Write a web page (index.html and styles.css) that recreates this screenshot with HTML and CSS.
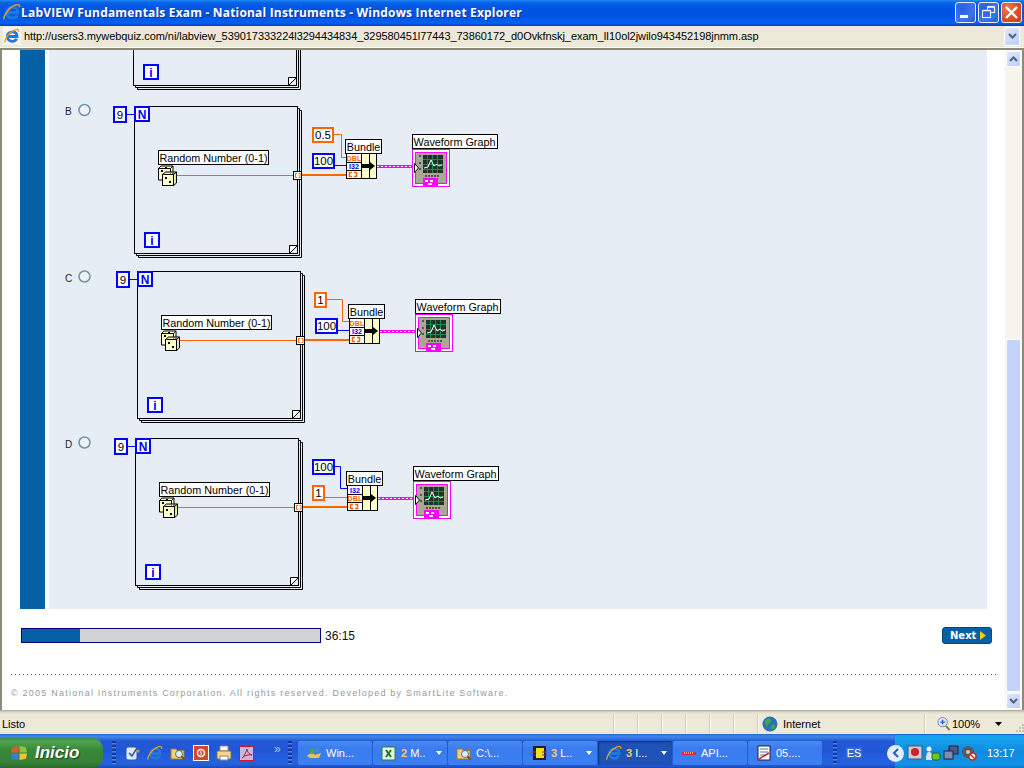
FILE: index.html
```html
<!DOCTYPE html>
<html lang="en">

<head>
    <meta charset="UTF-8">
    <title>LabVIEW Fundamentals Exam - National Instruments - Windows Internet Explorer</title>
    <link rel="stylesheet" href="styles.css">
</head>

<body>

    <!-- shared drawings -->
    <svg class="defs" width="0" height="0">
        <defs>
            <symbol id="ie" viewBox="0 0 16 16">
                <path d="M4 8.500h9c0-3-1.800-4.700-4.500-4.700S3.300 5.800 3.300 8.600s2.200 4.700 5 4.700c2.100 0 3.600-.900 4.300-2.600" fill="none" stroke="#1f78dc" stroke-width="2.800"/>
                <path d="M1 14.500C0 12 5 4 11 1.800c3-1 4 .3 3.600 2" fill="none" stroke="#e8a020" stroke-width="1.300"/>
            </symbol>
            <symbol id="folder" viewBox="0 0 16 16">
                <path d="M1 4h5l1 1.500h7V14H1z" fill="#f3cf77" stroke="#a57a24"/>
                <circle cx="9" cy="9" r="3.500" fill="#dfeefa" stroke="#5d6f80"/>
                <path d="M11.500 11.500l3 3" stroke="#7a4f1c" stroke-width="2"/>
            </symbol>
            <g id="loop">
                <rect x=".5" y=".5" width="163" height="147" class="frame"/>
                <path d="M2.500 147.500v2h163V2.500h-2M4.500 149.500v2h163V4.500h-2" class="frame"/>
                <path d="M155.500 147.500v-8h8zM155.500 147.500l8-8" fill="#fff" stroke="#000"/>
            </g>
            <g id="dice">
                <path d="M158.500 168.500l2.500-2.500h12v10h-3v4h-11.500z" fill="#ffc" stroke="#000"/>
                <path d="M158.500 168.500h12l2.500-2.500M170.500 168.500v5" fill="none" stroke="#000"/>
                <rect x="162.500" y="174.500" width="11" height="11" fill="#ffc" stroke="#000"/>
                <path d="M173.500 174.500l3-2.500v11l-3 2.500zM162.500 174.500l3-2.500h11" fill="#e8e4a8" stroke="#000"/>
                <path d="M165 177h2v2h-2zM169 181h2v2h-2zM161 170h2v2h-2zM165 167h2v1h-2z" fill="#000"/>
            </g>
            <g id="tunnel">
                <rect x="293.500" y="171.500" width="8" height="8" fill="#fff" stroke="#000"/>
                <path d="M297 173.500h-1.500v4H297M298.500 173.500h1.500v4h-1.500" fill="none" stroke="#f60"/>
            </g>
            <g id="bundle">
                <rect x="346.500" y="153.500" width="30" height="25" fill="#ffc" stroke="#000"/>
                <rect x="346.500" y="153.500" width="15" height="25" fill="#fff" stroke="#000"/>
                <path d="M346 162.500h15M346 170.500h15M369.500 153v25" stroke="#000"/>
                <path d="M362 164h8v-2l5 4-5 4v-2h-8z" fill="#000"/>
                <path d="M352 172.500h-2.500v4H352M354 172.500h2.500v4H354" fill="none" stroke="#f60" stroke-width="1.500"/>
            </g>
            <g id="graph">
                <path d="M377 166.500h36" stroke="#f0f" stroke-width="3"/>
                <path d="M377 166.500h36" stroke="#fff" stroke-dasharray="2 2"/>
                <rect x="412.500" y="149.500" width="37" height="37" fill="#fff" stroke="#f0f"/>
                <rect x="415.500" y="152.500" width="31" height="31" fill="#fff" stroke="#f0f"/>
                <rect x="416" y="153" width="30" height="30" fill="#aaa794"/>
                <rect x="423" y="155" width="20" height="18" fill="#24302a"/>
                <path d="M423 159.500h20M423 164.500h20M423 169.500h20M427.500 155v18M432.500 155v18M437.500 155v18" stroke="#1c8a4a"/>
                <path d="M424 168l4-1 3-7 3 6 3-2 2 2 3-1" fill="none" stroke="#fff"/>
                <path d="M419 156h2M419 163h2M419 169h2M425 176h15" stroke="#000" stroke-dasharray="2 1"/>
                <path d="M414.500 163.500v9l4-4.500z" fill="#fff" stroke="#000"/>
                <rect x="423" y="178" width="15" height="8" fill="#f0f"/>
                <path d="M425 180h3v2h-3zM430 180h3v2h-3zM428 183h4v2h-4z" fill="#fff"/>
            </g>
        </defs>
    </svg>

    <div class="window">

        <div class="titlebar">
            <svg class="title-icon"><use href="#ie"/></svg>
            <span class="title-text">LabVIEW Fundamentals Exam - National Instruments - Windows Internet Explorer</span>
            <div class="caption-btn">
                <svg width="19" height="19"><path d="M4 12h8v3H4z" fill="#fff"/></svg>
            </div>
            <div class="caption-btn">
                <svg width="19" height="19"><path d="M8.500 6.500V3.500h7v6h-4M3.500 7.500h8v7h-8z" fill="none" stroke="#fff"/><path d="M4 7.500h7M9 4h6" stroke="#fff" stroke-width="1.500"/></svg>
            </div>
            <div class="caption-btn caption-close">
                <svg width="19" height="19"><path d="M4 4l11 11M15 4L4 15" stroke="#fff" stroke-width="2.400"/></svg>
            </div>
        </div>

        <div class="addressbar">
            <div class="address-icon"><svg width="16" height="16"><use href="#ie"/></svg></div>
            <span class="url">http://users3.mywebquiz.com/ni/labview_539017333224l3294434834_329580451l77443_73860172_d0Ovkfnskj_exam_lI10ol2jwilo943452198jnmm.asp</span>
            <div class="xp-btn address-drop">
                <svg width="9" height="6"><path d="M1 1l3.500 3.500L8 1" fill="none" stroke="#4d6185" stroke-width="2"/></svg>
            </div>
        </div>

        <div class="viewport">
            <div class="page">

                <div class="question">
                    <div class="strip"></div>
                    <div class="panel">
                        <svg class="diagram" width="938" height="559" viewBox="49 50 938 559">

                            <!-- end of option A, scrolled off -->
                            <g transform="translate(-1,-168)">
                                <use href="#loop" x="134" y="106"/>
                                <rect x="145" y="233" width="14" height="14" class="box-blue"/>
                                <text x="152" y="245" class="big-i">i</text>
                            </g>

                            <g>
                                <circle cx="84.500" cy="110" r="5.500" class="radio"/>
                                <text x="65" y="115" class="key">B</text>
                                <use href="#loop" x="134" y="106"/>
                                <rect x="114" y="107" width="12" height="15" class="box-blue"/>
                                <text x="120" y="118.500" class="num">9</text>
                                <path d="M127 114.500h7" class="wire-blue"/>
                                <rect x="135" y="107" width="14" height="14" class="box-blue"/>
                                <text x="142" y="118.500" class="big-i">N</text>
                                <rect x="145" y="233" width="14" height="14" class="box-blue"/>
                                <text x="152" y="245" class="big-i">i</text>
                                <path d="M177 175.500h116" class="wire-orange"/>
                                <use href="#dice"/>
                                <rect x="158.500" y="150.500" width="110" height="14" class="label"/>
                                <text x="213.500" y="161.500" class="lbl">Random Number (0-1)</text>
                                <use href="#tunnel"/>
                                <path d="M302 175h44" class="wire-thick"/>
                                <rect x="313" y="128" width="20" height="14" class="box-orange"/>
                                <text x="323" y="139" class="num">0.5</text>
                                <path d="M334 134.500h7.500v23H346" class="wire-orange"/>
                                <rect x="313" y="154" width="21" height="14" class="box-blue"/>
                                <text x="323.500" y="165" class="num">100</text>
                                <path d="M335 165.500h11" class="wire-blue"/>
                                <use href="#bundle"/>
                                <text x="354" y="160.500" class="term term-orange">DBL</text>
                                <text x="354" y="168.800" class="term term-blue">I32</text>
                                <rect x="345.500" y="139.500" width="36" height="14" class="label"/>
                                <text x="363.500" y="150.500" class="lbl">Bundle</text>
                                <use href="#graph"/>
                                <rect x="412.500" y="134.500" width="85" height="14" class="label"/>
                                <text x="454.500" y="145.500" class="lbl">Waveform Graph</text>
                            </g>

                            <circle cx="84.500" cy="276.500" r="5.500" class="radio"/>
                            <text x="65" y="282" class="key">C</text>
                            <g transform="translate(3,165)">
                                <use href="#loop" x="134" y="106"/>
                                <rect x="114" y="107" width="12" height="15" class="box-blue"/>
                                <text x="120" y="118.500" class="num">9</text>
                                <path d="M127 114.500h7" class="wire-blue"/>
                                <rect x="135" y="107" width="14" height="14" class="box-blue"/>
                                <text x="142" y="118.500" class="big-i">N</text>
                                <rect x="145" y="233" width="14" height="14" class="box-blue"/>
                                <text x="152" y="245" class="big-i">i</text>
                                <path d="M177 175.500h116" class="wire-orange"/>
                                <use href="#dice"/>
                                <rect x="158.500" y="150.500" width="110" height="14" class="label"/>
                                <text x="213.500" y="161.500" class="lbl">Random Number (0-1)</text>
                                <use href="#tunnel"/>
                                <path d="M302 175h44" class="wire-thick"/>
                                <rect x="312" y="128" width="11" height="14" class="box-orange"/>
                                <text x="317.500" y="139" class="num">1</text>
                                <path d="M324 134.500h15.500v22H346" class="wire-orange"/>
                                <rect x="313" y="154" width="21" height="14" class="box-blue"/>
                                <text x="323.500" y="165" class="num">100</text>
                                <path d="M335 165.500h11" class="wire-blue"/>
                                <use href="#bundle"/>
                                <text x="354" y="160.500" class="term term-orange">DBL</text>
                                <text x="354" y="168.800" class="term term-blue">I32</text>
                                <rect x="345.500" y="139.500" width="36" height="14" class="label"/>
                                <text x="363.500" y="150.500" class="lbl">Bundle</text>
                                <use href="#graph"/>
                                <rect x="412.500" y="134.500" width="85" height="14" class="label"/>
                                <text x="454.500" y="145.500" class="lbl">Waveform Graph</text>
                            </g>

                            <circle cx="84.500" cy="442.500" r="5.500" class="radio"/>
                            <text x="65" y="448" class="key">D</text>
                            <g transform="translate(1,332)">
                                <use href="#loop" x="134" y="106"/>
                                <rect x="114" y="107" width="12" height="15" class="box-blue"/>
                                <text x="120" y="118.500" class="num">9</text>
                                <path d="M127 114.500h7" class="wire-blue"/>
                                <rect x="135" y="107" width="14" height="14" class="box-blue"/>
                                <text x="142" y="118.500" class="big-i">N</text>
                                <rect x="145" y="233" width="14" height="14" class="box-blue"/>
                                <text x="152" y="245" class="big-i">i</text>
                                <path d="M177 175.500h116" class="wire-orange"/>
                                <use href="#dice"/>
                                <rect x="158.500" y="150.500" width="110" height="14" class="label"/>
                                <text x="213.500" y="161.500" class="lbl">Random Number (0-1)</text>
                                <use href="#tunnel"/>
                                <path d="M302 175h44" class="wire-thick"/>
                                <rect x="312" y="128" width="21" height="14" class="box-blue"/>
                                <text x="322.500" y="139" class="num">100</text>
                                <path d="M334 134.500h5.500v22H346" class="wire-blue"/>
                                <rect x="312" y="154" width="11" height="14" class="box-orange"/>
                                <text x="317.500" y="165" class="num">1</text>
                                <path d="M324 165.500h22" class="wire-orange"/>
                                <use href="#bundle"/>
                                <text x="354" y="160.500" class="term term-blue">I32</text>
                                <text x="354" y="168.800" class="term term-orange">DBL</text>
                                <rect x="345.500" y="139.500" width="36" height="14" class="label"/>
                                <text x="363.500" y="150.500" class="lbl">Bundle</text>
                                <use href="#graph"/>
                                <rect x="412.500" y="134.500" width="85" height="14" class="label"/>
                                <text x="454.500" y="145.500" class="lbl">Waveform Graph</text>
                            </g>
                        </svg>
                    </div>
                </div>

                <div class="progress-row">
                    <div class="progress"><div class="progress-fill" style="width: 58px"></div></div>
                    <span class="time">36:15</span>
                    <div class="next-btn">Next<svg width="6" height="9"><path d="M0 0l6 4.500L0 9z" fill="#fc0"/></svg></div>
                </div>

                <div class="dots"></div>
                <div class="copyright">© 2005 National Instruments Corporation. All rights reserved. Developed by SmartLite Software.</div>
            </div>

            <div class="scrollbar">
                <div class="xp-btn scroll-btn">
                    <svg width="9" height="6"><path d="M1 5l3.500-3.500L8 5" fill="none" stroke="#4d6185" stroke-width="2"/></svg>
                </div>
                <div class="scroll-track"></div>
                <div class="xp-btn scroll-thumb"></div>
                <div class="xp-btn scroll-btn">
                    <svg width="9" height="6"><path d="M1 1l3.500 3.500L8 1" fill="none" stroke="#4d6185" stroke-width="2"/></svg>
                </div>
            </div>
        </div>

        <div class="statusbar">
            <span class="status-main">Listo</span>
            <span class="status-cell"></span>
            <span class="status-cell"></span>
            <span class="status-cell"></span>
            <span class="status-cell"></span>
            <span class="status-cell"></span>
            <span class="status-cell"></span>
            <span class="status-zone">
                <svg width="16" height="16" viewBox="0 0 16 16"><circle cx="8" cy="8" r="7.500" fill="#2f6fb5"/><path d="M3 5c2-3 5-3 6-1s-2 3-3 5-3 1-3-4zM10 9c2-1 4 0 3 2s-3 3-4 2 0-3 1-4z" fill="#38a848"/></svg>
                Internet
            </span>
            <span class="status-zoom">
                <svg width="14" height="16" viewBox="0 0 15 16"><circle cx="6" cy="6" r="5" fill="#dbe8f6" stroke="#7088a8"/><path d="M3.500 6h5M6 3.500v5" stroke="#1f5fc0" stroke-width="1.500"/><path d="M9.500 10l4 4.500" stroke="#9a7440" stroke-width="2"/></svg>
                100%
                <svg class="zoom-caret" width="7" height="4"><path d="M0 0h7L3.500 4z" fill="#000"/></svg>
                <svg class="size-grip" width="11" height="11"><path d="M9 1h2v2H9zM6 4h2v2H6zM9 4h2v2H9zM3 7h2v2H3zM6 7h2v2H6zM9 7h2v2H9z" fill="#c5c2b0"/></svg>
            </span>
        </div>

        <div class="taskbar">
            <div class="start">
                <svg width="16" height="16" viewBox="0 0 15 15"><path d="M1 2l6-1v6H0z" fill="#e8552a"/><path d="M8 1l6 1 1 5H8z" fill="#8cc63f"/><path d="M0 8h7v6l-6-1z" fill="#3b7be0"/><path d="M8 8h7l-1 5-6 1z" fill="#f7c52b"/></svg>
                <span>Inicio</span>
            </div>
            <div class="grip grip-first"></div>
            <div class="quick">
                <svg width="16" height="16" viewBox="0 0 16 16"><rect x="2" y="2" width="11" height="13" rx="2" fill="#dfeaf8" stroke="#2c5aa8"/><path d="M5 8l3 3 5-8" fill="none" stroke="#2c5aa8" stroke-width="1.500"/><circle cx="14" cy="6" r="1.500" fill="#e8902a"/></svg>
                <svg width="16" height="16"><use href="#ie"/></svg>
                <svg width="16" height="16"><use href="#folder"/></svg>
                <svg width="16" height="16" viewBox="0 0 16 16"><rect x=".5" y=".5" width="15" height="15" fill="#d6482c" stroke="#fff"/><circle cx="8" cy="8" r="3.500" fill="none" stroke="#fff" stroke-width="1.500"/><path d="M8 6v4" stroke="#fff"/></svg>
                <svg width="16" height="16" viewBox="0 0 16 16"><path d="M4 1h8v5H4z" fill="#fff" stroke="#888"/><rect x="1" y="6" width="14" height="8" rx="1" fill="#f0d68a" stroke="#8a7440"/><path d="M4 11h8v4H4z" fill="#fff" stroke="#888"/></svg>
                <svg width="15" height="15" viewBox="0 0 15 15"><rect x=".5" y=".5" width="14" height="14" fill="#c9b6e4" stroke="#e0101a"/><path d="M3 12c2-1 4-6 5-9 0 3 2 5 5 6-3-.500-7 0-10 3z" fill="none" stroke="#c81020"/></svg>
            </div>
            <span class="chevron">»</span>
            <div class="grip"></div>

            <div class="task">
                <svg width="16" height="16" viewBox="0 0 16 16"><path d="M1 11c3-3 6-3 8-1l6-2-2 5H4z" fill="#f0c050"/><circle cx="6" cy="6" r="2.500" fill="#49a84a"/><circle cx="11" cy="5" r="2.500" fill="#3f8ad8"/></svg>
                <span class="task-name">Win...</span>
            </div>
            <div class="task">
                <svg width="16" height="16" viewBox="0 0 16 16"><rect x="1" y="2" width="13" height="13" fill="#e8f3e8" stroke="#2d7d3a"/><path d="M5 5l5 7M10 5l-5 7" stroke="#1c7a30" stroke-width="2"/></svg>
                <span class="task-name"><b>2</b> M..</span>
                <i class="caret"></i>
            </div>
            <div class="task">
                <svg width="16" height="16"><use href="#folder"/></svg>
                <span class="task-name">C:\...</span>
            </div>
            <div class="task">
                <svg width="16" height="16" viewBox="0 0 16 16"><rect x="2" y="1" width="13" height="14" fill="#222"/><rect x="5" y="3" width="8" height="10" fill="#e8e020"/><path d="M0 7h5M11 7h5" stroke="#e02020"/><path d="M0 10h5M11 10h5" stroke="#2040e0"/></svg>
                <span class="task-name"><b>3</b> L..</span>
                <i class="caret"></i>
            </div>
            <div class="task task-active">
                <svg width="16" height="16"><use href="#ie"/></svg>
                <span class="task-name"><b>3</b> I...</span>
                <i class="caret"></i>
            </div>
            <div class="task">
                <svg width="16" height="16" viewBox="0 0 16 16"><path d="M1 7h14v3H1z" fill="#e02830"/><path d="M3 8h10" stroke="#fff" stroke-dasharray="1 1"/></svg>
                <span class="task-name">API...</span>
            </div>
            <div class="task">
                <svg width="16" height="16" viewBox="0 0 16 16"><rect x="2" y="1" width="12" height="14" fill="#fff" stroke="#223"/><path d="M4 4h8M4 7h8M4 10h5" stroke="#5570a0"/><path d="M3 14l10-6" stroke="#c02020" stroke-width="1.500"/></svg>
                <span class="task-name">05....</span>
            </div>

            <div class="grip grip-lang"></div>
            <span class="lang">ES</span>
            <div class="tray">
                <div class="tray-arrow">
                    <svg width="8" height="10"><path d="M6 1L2 5l4 4" fill="none" stroke="#1e5ec8" stroke-width="2"/></svg>
                </div>
                <svg width="16" height="16" viewBox="0 0 16 16"><rect x="1" y="1" width="14" height="13" fill="#c8ccd8" stroke="#556"/><circle cx="8" cy="7" r="4" fill="#c82030"/></svg>
                <svg width="16" height="16" viewBox="0 0 16 16"><circle cx="4" cy="4" r="2.500" fill="#eef"/><path d="M1 15c0-6 1-8 3-8s4 2 4 8z" fill="#dde4f0"/><rect x="7" y="8" width="8" height="7" rx="2" fill="#6cc820" stroke="#2c6010"/></svg>
                <svg width="16" height="16" viewBox="0 0 16 16"><rect x="6" y="1" width="9" height="8" fill="#48588c" stroke="#223"/><rect x="1" y="6" width="9" height="8" fill="#7c8cb8" stroke="#223"/></svg>
                <svg width="16" height="16" viewBox="0 0 16 16"><circle cx="7" cy="7" r="6" fill="#57595f"/><circle cx="7" cy="7" r="2" fill="#ccc"/><circle cx="11.500" cy="11.500" r="3.500" fill="#fff" stroke="#d8201c" stroke-width="1.500"/><path d="M9 9l5 5" stroke="#d8201c" stroke-width="1.500"/></svg>
                <span class="clock">13:17</span>
            </div>
        </div>
    </div>

</body>

</html>
```

FILE: styles.css
```css
* {
    box-sizing: border-box;
}

body {
    margin: 0;
    overflow: hidden;
    font-family: "Liberation Sans", Arial, sans-serif;
}

.defs {
    display: block;
}

.window {
    width: 1024px;
    height: 768px;
    display: flex;
    flex-direction: column;
    background: #ece9d8;
}


/* title bar */

.titlebar {
    height: 26px;
    flex: none;
    display: flex;
    align-items: center;
    padding: 0 2px 2px 3px;
    background: linear-gradient(#1f8af5 0, #0a62e8 10%, #0055e5 30%, #0052e0 60%, #0061f2 88%, #0a55dd 92%, #003fc0 100%);
}

.title-icon {
    width: 18px;
    height: 18px;
}

.title-text {
    flex: 1;
    color: #fff;
    font-family: "Open Sans", sans-serif;
    font-size: 12px;
    font-weight: 700;
    letter-spacing: 0.18px;
    white-space: nowrap;
    text-shadow: 1px 1px 0 #0a2f9a;
}

.caption-btn {
    width: 21px;
    height: 21px;
    margin-left: 2px;
    border: 1px solid #e8eefa;
    border-radius: 3px;
    background: radial-gradient(circle at 30% 30%, #2a5fe0, #3e74ee 60%, #2b55c8);
}

.caption-btn svg {
    display: block;
}

.caption-close {
    background: radial-gradient(circle at 30% 30%, #e87a55, #dd4a22 60%, #c23c18);
}


/* address bar */

.addressbar {
    height: 24px;
    flex: none;
    display: flex;
    align-items: center;
    padding: 1px 4px 3px 3px;
    background: #ece9d8;
    border-bottom: 2px solid #8d897b;
    box-shadow: inset 0 -1px 0 #fff;
}

.address-icon {
    width: 18px;
    height: 18px;
    padding: 1px;
    margin-right: 3px;
    background: #f6f5ee;
}

.url {
    flex: 1;
    font-size: 11px;
    letter-spacing: -0.06px;
    color: #000;
    white-space: nowrap;
    overflow: hidden;
}

.xp-btn {
    display: flex;
    align-items: center;
    justify-content: center;
    background: linear-gradient(135deg, #dfe8fc, #bccdf6);
    border: 1px solid #fff;
    border-radius: 2px;
}

.address-drop {
    width: 16px;
    height: 19px;
}


/* page */

.viewport {
    height: 660px;
    flex: none;
    display: flex;
    border-left: 2px solid #8d897b;
    border-right: 2px solid #8d897b;
}

.page {
    width: 1003px;
    padding: 0 8px 0 9px;
    background: #fff;
}

.question {
    display: flex;
    height: 559px;
    margin-left: 9px;
    width: 967px;
}

.strip {
    width: 25px;
    background: #0560a6;
}

.panel {
    margin-left: 4px;
    flex: 1;
    background: #e6edf5;
    overflow: hidden;
}

.diagram {
    display: block;
}

.diagram text {
    font-family: "Liberation Sans", Arial, sans-serif;
}

.frame {
    fill: none;
    stroke: #000;
}

.box-blue {
    fill: #fff;
    stroke: #00f;
    stroke-width: 2;
}

.box-orange {
    fill: #fff;
    stroke: #f60;
    stroke-width: 2;
}

.label {
    fill: #fff;
    stroke: #000;
}

.lbl {
    font-size: 10.8px;
    text-anchor: middle;
}

.num {
    font-size: 11.5px;
    text-anchor: middle;
}

.big-i {
    font-size: 12px;
    font-weight: 700;
    fill: #00f;
    text-anchor: middle;
}

.term {
    font-size: 7.2px;
    font-weight: 700;
    text-anchor: middle;
}

.term-orange {
    fill: #f60;
}

.term-blue {
    fill: #00f;
}

.key {
    font-size: 10px;
    fill: #222;
}

.radio {
    fill: #f0f1f2;
    stroke: #6f93ad;
    stroke-width: 1.5;
}

.wire-blue,
.wire-orange,
.wire-thick {
    fill: none;
}

.wire-blue {
    stroke: #00f;
}

.wire-orange {
    stroke: #f60;
}

.wire-thick {
    stroke: #f60;
    stroke-width: 2;
}

.progress-row {
    display: flex;
    align-items: center;
    height: 17px;
    margin: 18px 5px 0 10px;
}

.progress {
    width: 300px;
    height: 15px;
    border: 1px solid #000080;
    background: #d3d3d3;
}

.progress-fill {
    height: 100%;
    background: #0560a6;
}

.time {
    margin-left: 4px;
    font-size: 12px;
    color: #111;
}

.next-btn {
    margin-left: auto;
    width: 50px;
    height: 17px;
    display: flex;
    align-items: center;
    gap: 4px;
    padding-left: 7px;
    border: 1px solid #03487f;
    border-radius: 3px;
    background: #0560a6;
    color: #fff;
    font-family: "DejaVu Sans", sans-serif;
    font-size: 10px;
    font-weight: 700;
}

.dots {
    height: 1px;
    margin-top: 30px;
    background: repeating-linear-gradient(90deg, #2a6a9a 0, #2a6a9a 1px, transparent 1px, transparent 4px);
}

.copyright {
    margin-top: 13px;
    font-size: 9px;
    letter-spacing: 1.23px;
    color: #999;
    white-space: nowrap;
}


/* scrollbar */

.scrollbar {
    width: 17px;
    padding: 1px;
    display: flex;
    flex-direction: column;
    background: #f6f4ec;
}

.scroll-btn {
    height: 16px;
    flex: none;
}

.scroll-track {
    height: 272px;
    flex: none;
}

.scroll-thumb {
    flex: 1;
    background: #c3d2fb;
    margin-bottom: 1px;
}


/* status bar */

.statusbar {
    height: 24px;
    flex: none;
    display: flex;
    align-items: center;
    padding-top: 4px;
    background: linear-gradient(#a9a698 0, #dcd9ca 2px, #ece9d8 4px);
    font-size: 11px;
    color: #000;
}

.status-main {
    width: 613px;
    padding-left: 2px;
}

.status-cell {
    width: 24px;
    height: 20px;
    border-left: 1px solid #cfccbc;
    box-shadow: inset 1px 0 0 #fff;
}

.status-zone,
.status-zoom {
    height: 20px;
    display: flex;
    align-items: center;
    border-left: 1px solid #cfccbc;
    box-shadow: inset 1px 0 0 #fff;
}

.status-zone {
    width: 167px;
    gap: 5px;
    padding-left: 4px;
}

.status-zoom {
    flex: 1;
    padding-left: 12px;
    gap: 1px;
}

.zoom-caret {
    margin-left: 14px;
}

.size-grip {
    margin: 8px 0 0 auto;
}


/* taskbar */

.taskbar {
    height: 34px;
    flex: none;
    display: flex;
    align-items: flex-end;
    background: linear-gradient(#2a5ec8 0, #3f86e8 2px, #3a7de2 4px, #2358d6 7px, #2157d6 50%, #2562df 85%, #2058d0 94%, #1c48b0 100%);
}

.start {
    width: 103px;
    height: 30px;
    display: flex;
    align-items: center;
    gap: 8px;
    padding-left: 11px;
    border-radius: 2px 11px 11px 2px;
    background: linear-gradient(#3f8a3f 0, #4fa34f 12%, #388838 40%, #37833a 80%, #2a6a2a 100%);
    color: #fff;
    font-size: 17px;
    font-weight: 700;
    font-style: italic;
    text-shadow: 1px 1px 1px #1a3f1a;
}

.grip {
    width: 4px;
    height: 24px;
    margin-bottom: 3px;
    margin-left: 4px;
    background: repeating-linear-gradient(#12389c 0, #12389c 2px, #5b8ce8 2px, transparent 4px);
}

.grip-first {
    margin-left: 9px;
}

.quick {
    display: flex;
    align-items: center;
    gap: 7px;
    margin-left: 8px;
    height: 30px;
}

.chevron {
    width: 10px;
    margin: 0 0 12px 20px;
    font-size: 12px;
    line-height: 14px;
    color: #a9c4f5;
}

.task {
    width: 74px;
    height: 24px;
    margin: 0 0 3px 1px;
    display: flex;
    align-items: center;
    gap: 4px;
    padding-left: 8px;
    border-radius: 2px;
    background: linear-gradient(#4a8cf2, #3a7cef 30%, #3b7ff2);
    color: #fff;
    font-size: 11px;
    white-space: nowrap;
}

.grip + .task {
    margin-left: 6px;
}

.task-name b {
    color: #ffc26a;
}

.task-active {
    background: #1e52b7;
    box-shadow: inset 1px 1px 2px #12337c;
}

.caret {
    margin-left: auto;
    margin-right: 5px;
    border-left: 3.5px solid transparent;
    border-right: 3.5px solid transparent;
    border-top: 4px solid #fff;
}

.grip-lang {
    margin-left: 11px;
}

.lang {
    width: 16px;
    margin: 0 0 9px 9px;
    color: #fff;
    font-size: 11px;
    background: #3566cf;
    text-align: center;
}

.tray {
    margin-left: 33px;
    width: 129px;
    height: 34px;
    flex: none;
    display: flex;
    align-items: center;
    gap: 2px;
    padding-top: 3px;
    background: linear-gradient(#10a0ec 0, #16a4ee 10%, #0e8ae0 50%, #1094e6 90%, #0e78cc 100%);
    border-top: 1px solid #1268c8;
}

.tray-arrow {
    width: 17px;
    height: 17px;
    margin: 0 1px 0 -8px;
    flex: none;
    display: flex;
    align-items: center;
    justify-content: center;
    border-radius: 50%;
    background: #e4eefc;
}

.clock {
    margin-left: 8px;
    color: #fff;
    font-size: 11px;
}
```
